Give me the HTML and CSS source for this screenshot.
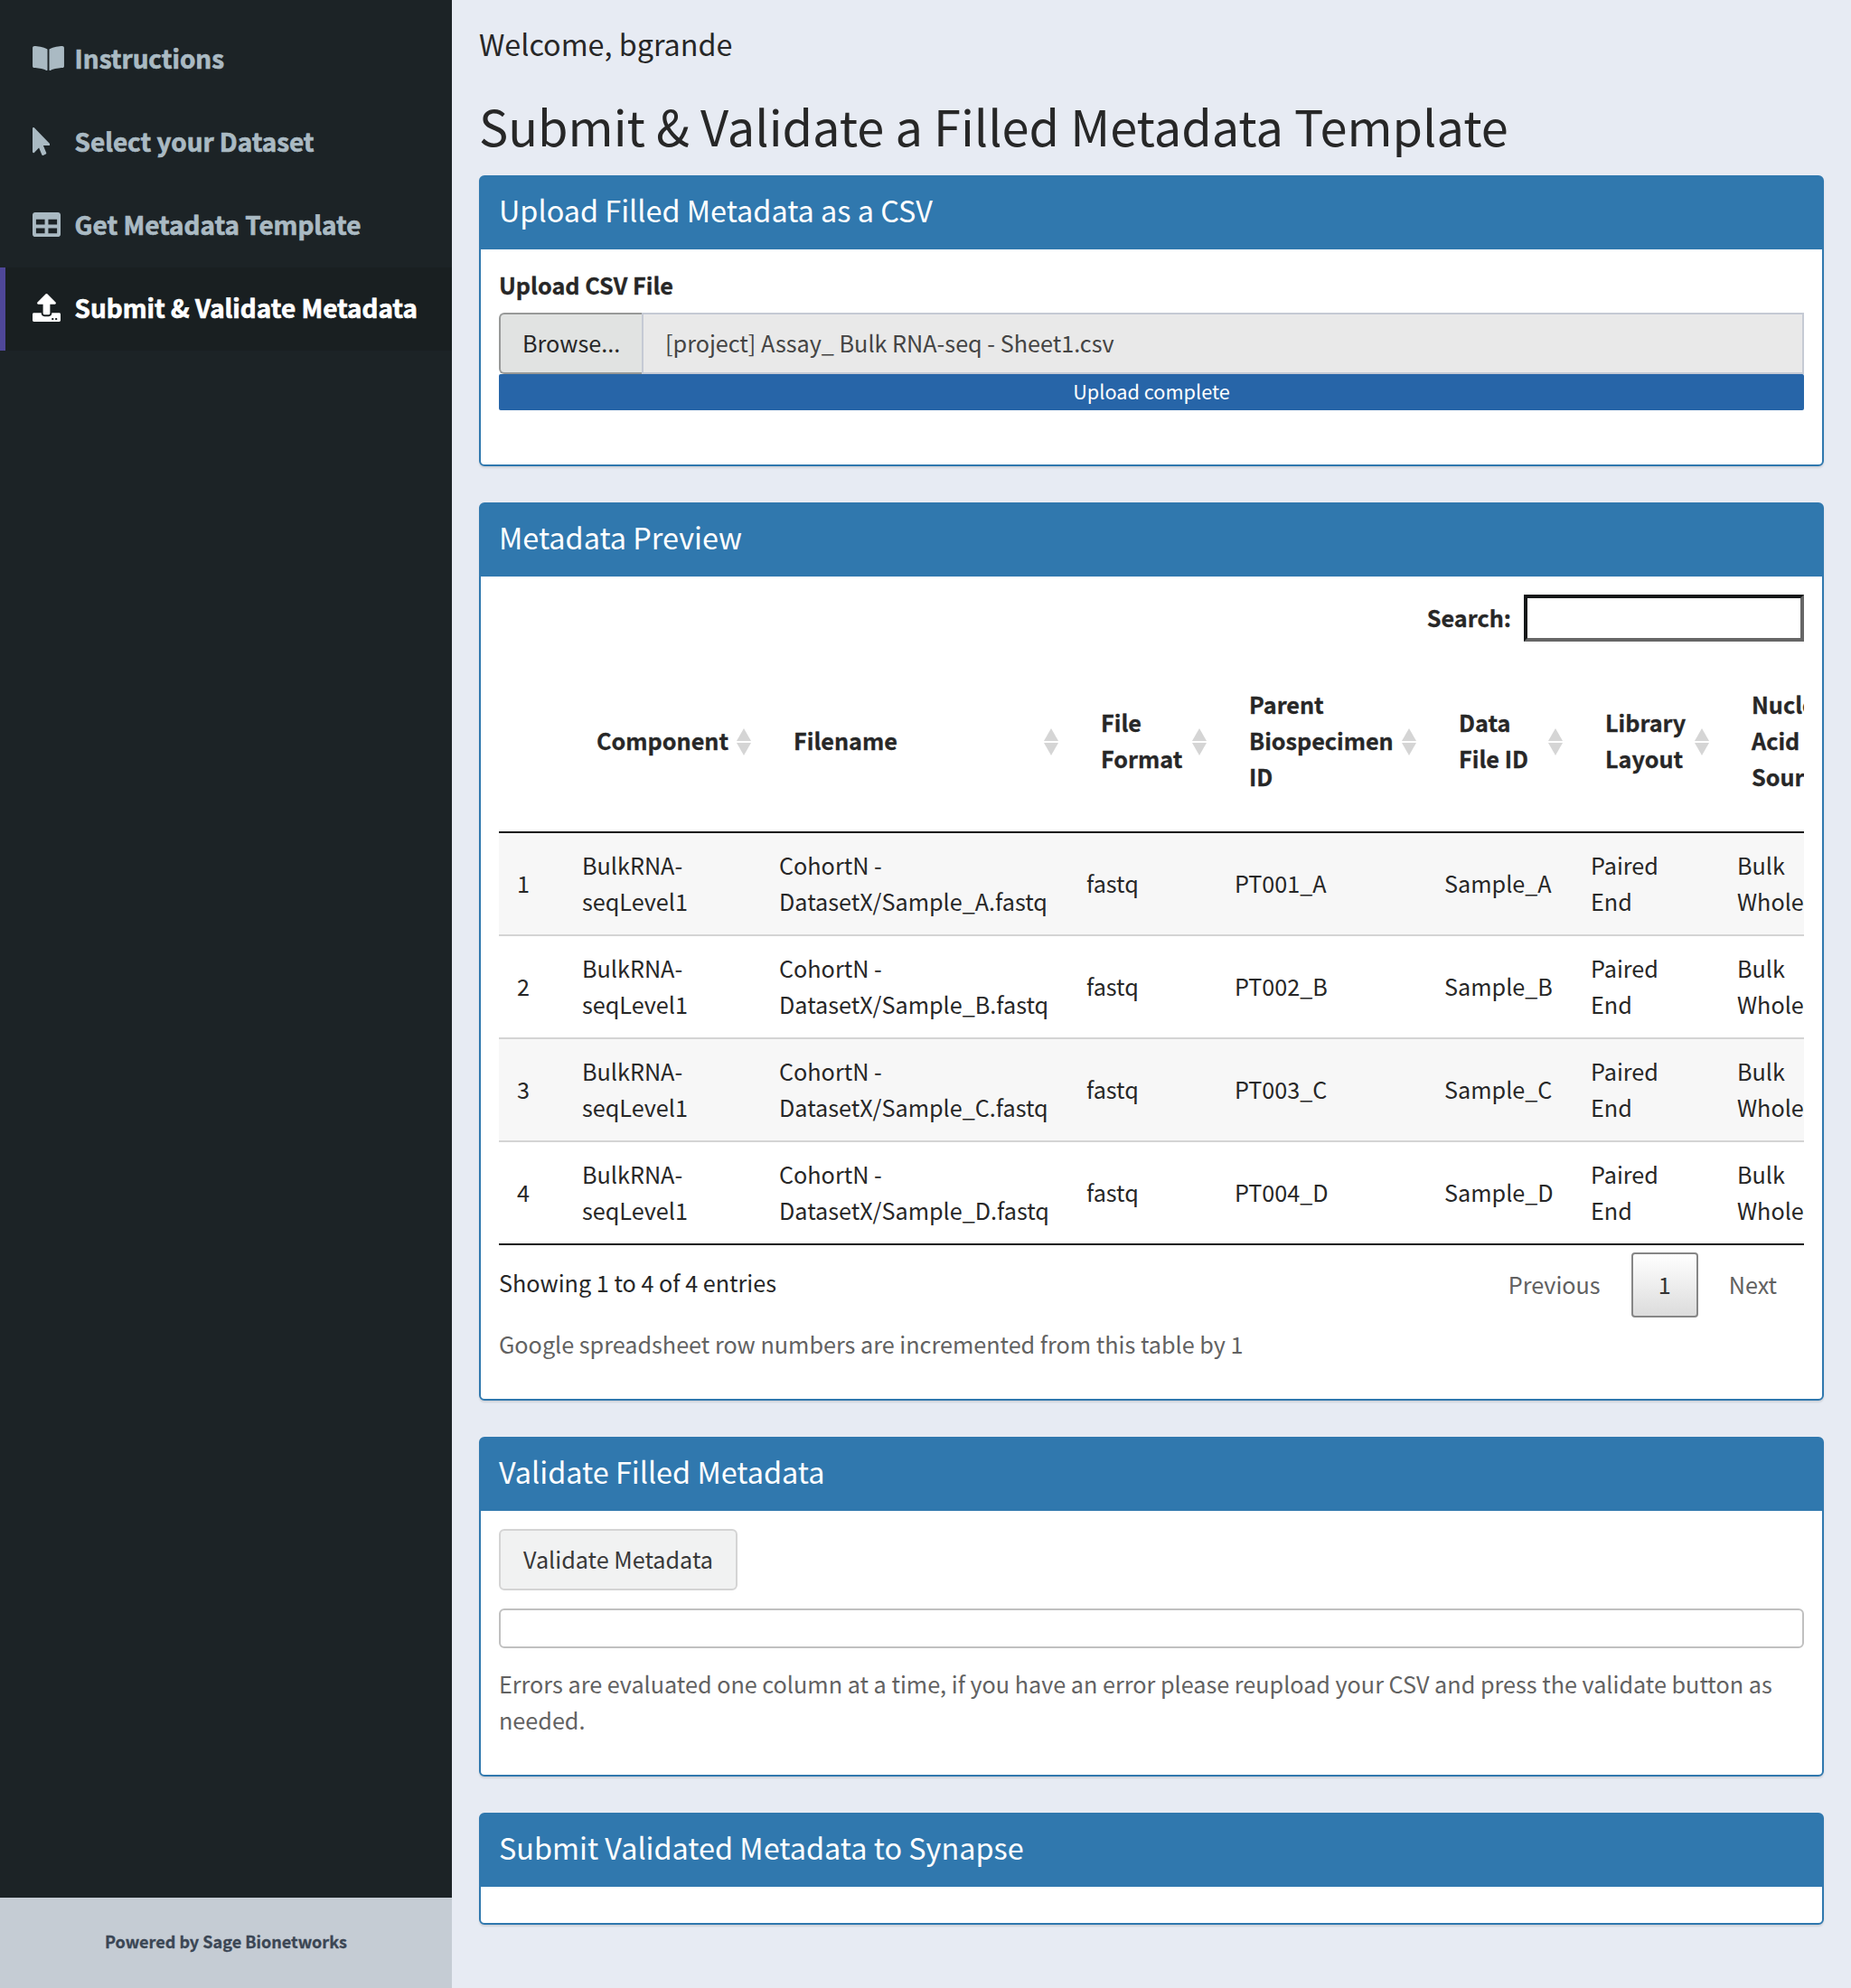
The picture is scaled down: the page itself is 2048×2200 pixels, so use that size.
FILE: index.html
```html
<!DOCTYPE html>
<html lang="en">
<head>
<meta charset="utf-8">
<title>Submit &amp; Validate Metadata</title>
<link rel="stylesheet" href="styles.css">
</head>
<body>
<div class="app">
  <aside class="sidebar">
    <nav class="menu">
      <a class="menu-item">
        <span class="menu-icon"><svg width="35" height="31" viewBox="0 0 576 512"><path d="M542.22 32.05c-54.8 3.11-163.72 14.43-230.96 55.59-4.64 2.84-7.27 7.89-7.27 13.17v363.87c0 11.55 12.63 18.85 23.28 13.49 69.18-34.82 169.23-44.32 218.7-46.92 16.89-.89 30.02-14.43 30.02-30.66V62.75c.01-17.71-15.35-31.74-33.77-30.7zM264.73 87.64C197.5 46.48 88.58 35.17 33.78 32.05 15.36 31.01 0 45.04 0 62.75V400.6c0 16.24 13.13 29.78 30.02 30.66 49.49 2.6 149.59 12.11 218.77 46.95 10.62 5.35 23.21-1.94 23.21-13.46V100.63c0-5.29-2.62-10.14-7.27-12.99z"/></svg></span>
        <span class="menu-text">Instructions</span>
      </a>
      <a class="menu-item">
        <span class="menu-icon"><svg width="19.4" height="31" viewBox="0 0 320 512"><path d="M302.189 329.126H196.105l55.831 135.993c3.889 9.428-.555 19.999-9.444 23.999l-49.165 21.427c-9.165 4-19.443-.571-23.332-9.714l-53.053-129.136-86.664 89.138C18.729 472.71 0 463.554 0 447.977V18.299C0 1.899 19.921-6.096 30.277 5.443l284.412 292.542c11.472 11.179 3.007 31.141-12.5 31.141z"/></svg></span>
        <span class="menu-text">Select your Dataset</span>
      </a>
      <a class="menu-item">
        <span class="menu-icon"><svg width="31" height="31" viewBox="0 0 512 512"><path d="M464 32H48C21.49 32 0 53.49 0 80v352c0 26.51 21.49 48 48 48h416c26.51 0 48-21.49 48-48V80c0-26.51-21.49-48-48-48zM224 416H64v-96h160v96zm0-160H64v-96h160v96zm224 160H288v-96h160v96zm0-160H288v-96h160v96z"/></svg></span>
        <span class="menu-text">Get Metadata Template</span>
      </a>
      <a class="menu-item active">
        <span class="menu-icon"><svg width="31" height="31" viewBox="0 0 512 512"><path d="M296 384h-80c-13.3 0-24-10.7-24-24V192h-87.7c-17.8 0-26.7-21.5-14.1-34.1L242.3 5.7c7.5-7.5 19.8-7.5 27.3 0l152.2 152.2c12.6 12.6 3.7 34.1-14.1 34.1H320v168c0 13.3-10.7 24-24 24zm216-8v112c0 13.3-10.7 24-24 24H24c-13.3 0-24-10.7-24-24V376c0-13.3 10.7-24 24-24h136v8c0 30.9 25.1 56 56 56h80c30.9 0 56-25.1 56-56v-8h136c13.3 0 24 10.7 24 24zm-124 88c0-11-9-20-20-20s-20 9-20 20 9 20 20 20 20-9 20-20zm64 0c0-11-9-20-20-20s-20 9-20 20 9 20 20 20 20-9 20-20z"/></svg></span>
        <span class="menu-text">Submit &amp; Validate Metadata</span>
      </a>
    </nav>
    <footer class="sidebar-footer">Powered by Sage Bionetworks</footer>
  </aside>

  <main class="content">
    <p class="welcome">Welcome, bgrande</p>
    <h1 class="page-title">Submit &amp; Validate a Filled Metadata Template</h1>

    <section class="box upload">
      <h2 class="box-header">Upload Filled Metadata as a CSV</h2>
      <div class="box-body">
        <label class="label">Upload CSV File</label>
        <div class="file-input">
          <span class="browse">Browse...</span>
          <span class="file-name">[project] Assay_ Bulk RNA-seq - Sheet1.csv</span>
        </div>
        <div class="progress">Upload complete</div>
      </div>
    </section>

    <section class="box preview">
      <h2 class="box-header">Metadata Preview</h2>
      <div class="box-body">
        <div class="search">
          <label class="search-label" for="search">Search:</label>
          <input class="search-input" id="search" type="text">
        </div>
        <div class="table-scroll">
          <table class="table">
            <colgroup><col class="c-row"><col class="c-component"><col class="c-filename"><col class="c-format"><col class="c-parent"><col class="c-fileid"><col class="c-layout"><col class="c-source"></colgroup>
            <thead>
              <tr>
                <th></th>
                <th class="sortable">Component</th>
                <th class="sortable">Filename</th>
                <th class="sortable">File<br>Format</th>
                <th class="sortable">Parent<br>Biospecimen<br>ID</th>
                <th class="sortable">Data<br>File ID</th>
                <th class="sortable">Library<br>Layout</th>
                <th>Nucleic<br>Acid<br>Source</th>
              </tr>
            </thead>
            <tbody>
              <tr><td>1</td><td>BulkRNA-<br>seqLevel1</td><td>CohortN -<br>DatasetX/Sample_A.fastq</td><td>fastq</td><td>PT001_A</td><td>Sample_A</td><td>Paired<br>End</td><td>Bulk<br>Whole</td></tr>
              <tr><td>2</td><td>BulkRNA-<br>seqLevel1</td><td>CohortN -<br>DatasetX/Sample_B.fastq</td><td>fastq</td><td>PT002_B</td><td>Sample_B</td><td>Paired<br>End</td><td>Bulk<br>Whole</td></tr>
              <tr><td>3</td><td>BulkRNA-<br>seqLevel1</td><td>CohortN -<br>DatasetX/Sample_C.fastq</td><td>fastq</td><td>PT003_C</td><td>Sample_C</td><td>Paired<br>End</td><td>Bulk<br>Whole</td></tr>
              <tr><td>4</td><td>BulkRNA-<br>seqLevel1</td><td>CohortN -<br>DatasetX/Sample_D.fastq</td><td>fastq</td><td>PT004_D</td><td>Sample_D</td><td>Paired<br>End</td><td>Bulk<br>Whole</td></tr>
            </tbody>
          </table>
        </div>
        <div class="table-footer">
          <span class="info">Showing 1 to 4 of 4 entries</span>
          <div class="pager">
            <span class="page">Previous</span>
            <span class="page current">1</span>
            <span class="page">Next</span>
          </div>
        </div>
        <p class="help">Google spreadsheet row numbers are incremented from this table by 1</p>
      </div>
    </section>

    <section class="box validate">
      <h2 class="box-header">Validate Filled Metadata</h2>
      <div class="box-body">
        <button class="button" type="button">Validate Metadata</button>
        <div class="result"></div>
        <p class="help">Errors are evaluated one column at a time, if you have an error please reupload your CSV and press the validate button as needed.</p>
      </div>
    </section>

    <section class="box submit">
      <h2 class="box-header">Submit Validated Metadata to Synapse</h2>
      <div class="box-body"></div>
    </section>
  </main>
</div>
</body>
</html>
```
FILE: styles.css
```css
* {
  box-sizing: border-box;
}

body {
  margin: 0;
  background: #e7ebf3;
  color: #272727;
  font-family: "Noto Sans CJK SC", "Source Sans Pro", sans-serif;
  font-size: 25.2px;
  line-height: 40px;
}

h1, h2, p {
  margin: 0;
  font-weight: 400;
}

.app {
  display: flex;
  height: 2200px;
  overflow: hidden;
}

/* Sidebar */
.sidebar {
  display: flex;
  flex-direction: column;
  justify-content: space-between;
  width: 500px;
  flex: none;
  background: #1c2326;
}

.menu {
  padding-top: 20px;
}

.menu-item {
  display: flex;
  align-items: center;
  height: 92px;
  padding: 0 0 3px 30px;
  border-left: 6px solid transparent;
  color: #aabac3;
  font-size: 27.85px;
  font-weight: 700;
  white-space: nowrap;
}

.menu-text {
  padding-bottom: 2px;
  -webkit-text-stroke: .7px currentColor;
}

.menu-item.active {
  background: #191f21;
  border-left-color: #4f4799;
  color: #fff;
}

.menu-icon {
  display: flex;
  width: 46.6px;
  flex: none;
}

.menu-icon svg {
  display: block;
  fill: currentColor;
}

.sidebar-footer {
  height: 100px;
  padding-top: 28px;
  background: #c5ccd4;
  color: #3b4654;
  font-size: 18.05px;
  font-weight: 700;
  text-align: center;
  -webkit-text-stroke: .3px currentColor;
}

/* Main column */
.content {
  flex: 1;
  min-width: 0;
  padding: 28px 30px 0;
}

.welcome {
  font-size: 32.3px;
}

.page-title {
  padding-top: 41px;
  font-size: 54.14px;
  line-height: 60px;
  height: 126px;
}

/* Boxes */
.box {
  border: 2px solid #3078ae;
  border-radius: 6px;
  background: #fff;
  box-shadow: 0 2px 2px rgba(0, 0, 0, .1);
}

.box + .box {
  margin-top: 40px;
}

.box-header {
  height: 80px;
  padding: 16px 20px 0;
  background: #3078ae;
  color: #fff;
  font-size: 32.4px;
}

.box-body {
  padding: 19px 20px 0;
}

.upload {
  height: 322px;
}

.preview {
  height: 994px;
}

.validate {
  height: 376px;
}

.submit {
  height: 124px;
}

/* Upload */
.label,
.search-label,
.table th {
  font-weight: 700;
  -webkit-text-stroke: .3px currentColor;
}

.label {
  display: block;
  margin-bottom: 11px;
}

.file-input {
  display: flex;
  height: 68px;
}

.browse {
  width: 158px;
  padding: 11px 0 0 24px;
  border: 2px solid #979998;
  border-right: 0;
  border-radius: 6px 0 0 6px;
  background: #e1e3e2;
}

.file-name {
  flex: 1;
  padding: 11px 24px 0 24px;
  border: 2px solid #c5cad4;
  background: #e9e9e9;
  color: #444;
}

.progress {
  height: 40px;
  border-radius: 2px;
  background: #2765a8;
  color: #fff;
  font-size: 21.7px;
  line-height: 37px;
  text-align: center;
}

/* Preview table */
.search {
  display: flex;
  justify-content: flex-end;
  padding-top: 1px;
  height: 63px;
}

.search-label {
  margin-right: 14px;
  padding-top: 5px;
}

.search-input {
  width: 310px;
  height: 52px;
  border: 4px solid;
  border-color: #151819 #666 #666 #151819;
  border-radius: 0;
  background: #fff;
}

.table-scroll {
  overflow: hidden;
}

.table {
  width: 1514px;
  table-layout: fixed;
  border-collapse: separate;
  border-spacing: 0;
}

.c-row { width: 72px; }
.c-component { width: 218px; }
.c-filename { width: 340px; }
.c-format { width: 164px; }
.c-parent { width: 232px; }
.c-fileid { width: 162px; }
.c-layout { width: 162px; }
.c-source { width: 164px; }

.table th {
  position: relative;
  height: 202px;
  padding: 0 0 2px 36px;
  border-bottom: 2px solid #111;
  text-align: left;
  white-space: nowrap;
}

.sortable::before,
.sortable::after {
  content: "";
  position: absolute;
  right: 11px;
  border: 8px solid transparent;
}

.sortable::before {
  top: 86px;
  border-top: 0;
  border-bottom: 14px solid #d5d5d5;
}

.sortable::after {
  top: 102px;
  border-bottom: 0;
  border-top: 14px solid #d5d5d5;
}

.table td {
  height: 114px;
  padding: 15px 0 17px 20px;
  border-bottom: 2px solid #d4d4d4;
  white-space: nowrap;
}

.table tbody tr:nth-child(odd) td {
  background: #f7f7f7;
}

.table tbody tr:last-child td {
  border-bottom-color: #111;
}

.table-footer {
  display: flex;
  justify-content: space-between;
  height: 89px;
}

.info {
  padding-top: 21px;
}

.pager {
  display: flex;
  padding-top: 8px;
}

.page {
  height: 72px;
  padding: 13px 28px 0;
  border: 2px solid transparent;
  color: #616161;
}

.page.current {
  width: 74px;
  margin: 0 4px;
  border-color: #868686;
  border-radius: 4px;
  background: linear-gradient(#fff, #dcdcdc);
  color: #333;
}

.help {
  color: #626262;
}

/* Validate */
.button {
  display: block;
  width: 264px;
  height: 68px;
  margin-top: 1px;
  padding: 0 0 2px;
  border: 2px solid #d4d4d4;
  border-radius: 6px;
  background: #f1f2f2;
  color: #383838;
  font: inherit;
}

.result {
  height: 44px;
  margin: 20px 0 19px;
  border: 2px solid #c0c0c0;
  border-radius: 6px;
}
```
